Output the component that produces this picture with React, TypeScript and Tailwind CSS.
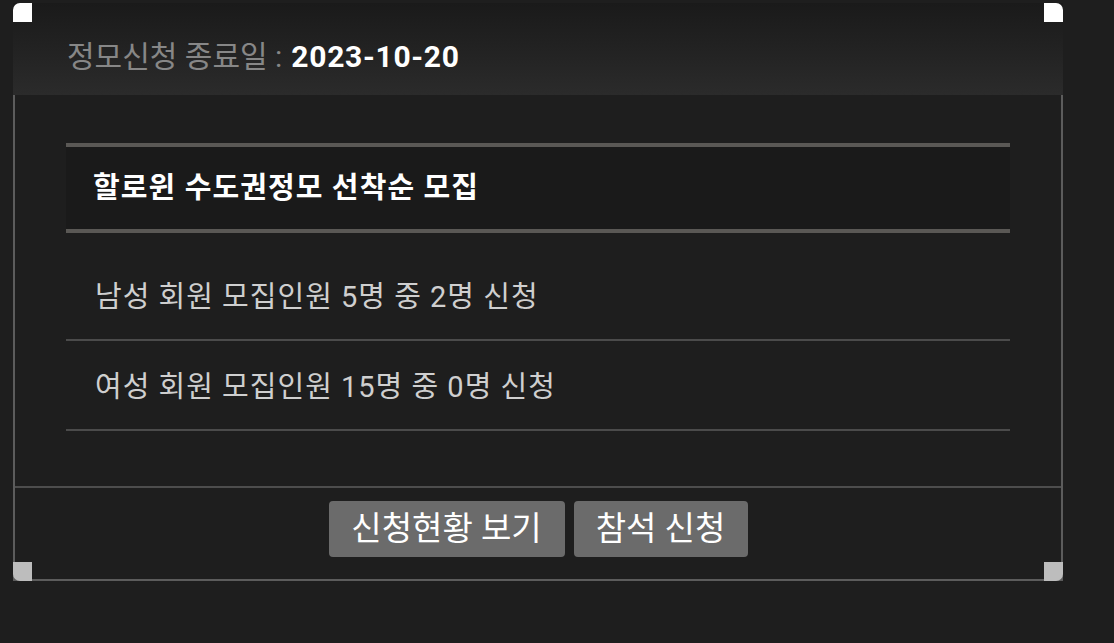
const font = "font-['Roboto','Noto_Sans_CJK_KR',sans-serif]";

function Corner({ pos }: { pos: "tl" | "tr" | "bl" | "br" }) {
  const cls = {
    tl: "left-0 top-0 rounded-tl-[7px] bg-white",
    tr: "right-0 top-0 rounded-tr-[7px] bg-white",
    bl: "left-0 bottom-0 rounded-bl-[7px] bg-[#bdbdbd]",
    br: "right-0 bottom-0 rounded-br-[7px] bg-[#bdbdbd]",
  }[pos];
  return <span className={`absolute h-[19px] w-[19px] ${cls}`} />;
}

export default function App() {
  const rows = ["남성 회원 모집인원 5명 중 2명 신청", "여성 회원 모집인원 15명 중 0명 신청"];

  return (
    <div className={`min-h-[643px] w-full bg-[#1e1e1e] pt-[3px] ${font}`}>
      <div className="relative ml-[13px] w-[1050px]">
        <header className="flex h-[92px] items-center bg-gradient-to-b from-[#1a1a1a] to-[#2b2b2b] pl-[54px] pt-[15px] text-[30px]">
          <span className="text-[#878787]">정모신청 종료일 : </span>
          <span className="ml-[9px] font-bold tracking-[0.7px] text-white">2023-10-20</span>
        </header>

        <div className="border-x-2 border-b-2 border-[#5c5c5c]">
          <div className="px-[51px] pb-[55px] pt-[48px]">
            <div className="flex h-[90px] items-center border-y-4 border-[#5a5855] bg-[#1a1a1a] pl-[27px] pt-[1px] text-[29px] font-bold tracking-[1.1px] text-white">
              할로윈 수도권정모 선착순 모집
            </div>
            {rows.map((row, i) => (
              <div
                key={row}
                className={`flex items-center border-b-2 border-[#4b4b4b] pl-[29px] text-[29px] tracking-[1px] text-[#cfcfcf] ${
                  i === 0 ? "h-[108px] pt-[24px]" : "h-[90px] pt-[6px]"
                }`}
              >
                {row}
              </div>
            ))}
          </div>

          <div className="flex justify-center gap-[9px] border-t-2 border-[#4d4d4d] pb-[22px] pt-[13px]">
            <button className="h-[56px] w-[236px] rounded-[4px] bg-[#6b6b6b] text-[33px] text-white">
              신청현황 보기
            </button>
            <button className="h-[56px] w-[174px] rounded-[4px] bg-[#6b6b6b] text-[33px] text-white">
              참석 신청
            </button>
          </div>
        </div>

        <Corner pos="tl" />
        <Corner pos="tr" />
        <Corner pos="bl" />
        <Corner pos="br" />
      </div>
    </div>
  );
}
